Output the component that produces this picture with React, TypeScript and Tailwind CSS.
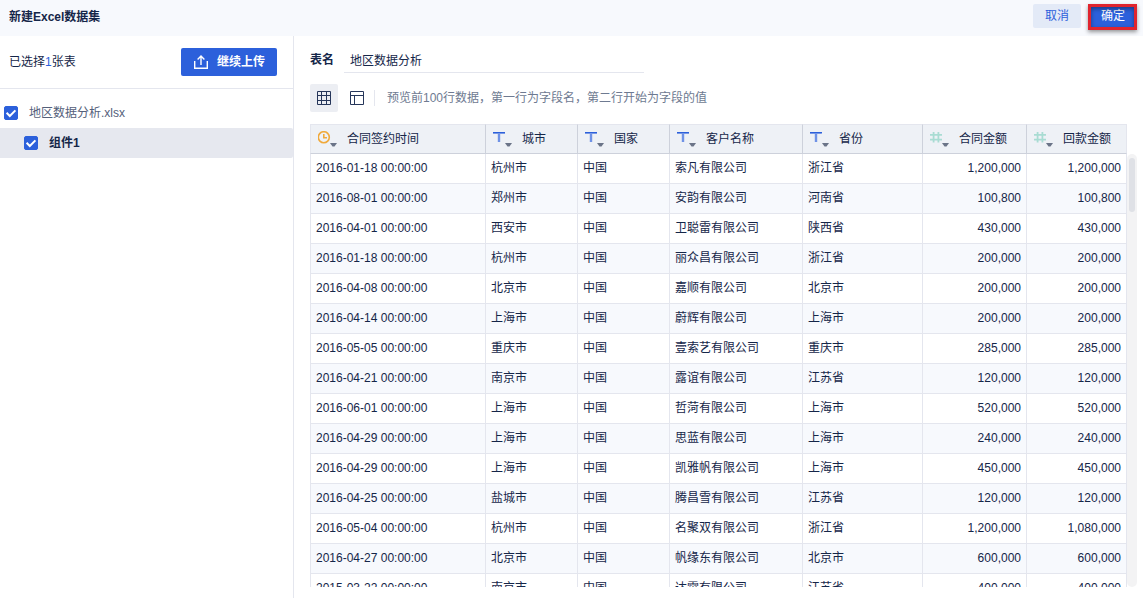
import { useState } from "react";

type FieldType = "date" | "text" | "number";

const columns: { name: string; type: FieldType; width: string }[] = [
  { name: "合同签约时间", type: "date", width: "w-[176px]" },
  { name: "城市", type: "text", width: "w-[92px]" },
  { name: "国家", type: "text", width: "w-[92px]" },
  { name: "客户名称", type: "text", width: "w-[133px]" },
  { name: "省份", type: "text", width: "w-[120px]" },
  { name: "合同金额", type: "number", width: "w-[104px]" },
  { name: "回款金额", type: "number", width: "w-[100px]" },
];

const rows = [
  ["2016-01-18 00:00:00", "杭州市", "中国", "索凡有限公司", "浙江省", "1,200,000", "1,200,000"],
  ["2016-08-01 00:00:00", "郑州市", "中国", "安韵有限公司", "河南省", "100,800", "100,800"],
  ["2016-04-01 00:00:00", "西安市", "中国", "卫聪雷有限公司", "陕西省", "430,000", "430,000"],
  ["2016-01-18 00:00:00", "杭州市", "中国", "丽众昌有限公司", "浙江省", "200,000", "200,000"],
  ["2016-04-08 00:00:00", "北京市", "中国", "嘉顺有限公司", "北京市", "200,000", "200,000"],
  ["2016-04-14 00:00:00", "上海市", "中国", "蔚辉有限公司", "上海市", "200,000", "200,000"],
  ["2016-05-05 00:00:00", "重庆市", "中国", "壹索艺有限公司", "重庆市", "285,000", "285,000"],
  ["2016-04-21 00:00:00", "南京市", "中国", "露谊有限公司", "江苏省", "120,000", "120,000"],
  ["2016-06-01 00:00:00", "上海市", "中国", "哲菏有限公司", "上海市", "520,000", "520,000"],
  ["2016-04-29 00:00:00", "上海市", "中国", "思蓝有限公司", "上海市", "240,000", "240,000"],
  ["2016-04-29 00:00:00", "上海市", "中国", "凯雅帆有限公司", "上海市", "450,000", "450,000"],
  ["2016-04-25 00:00:00", "盐城市", "中国", "腾昌雪有限公司", "江苏省", "120,000", "120,000"],
  ["2016-05-04 00:00:00", "杭州市", "中国", "名聚双有限公司", "浙江省", "1,200,000", "1,080,000"],
  ["2016-04-27 00:00:00", "北京市", "中国", "帆缘东有限公司", "北京市", "600,000", "600,000"],
  ["2015-03-22 00:00:00", "南京市", "中国", "达霄有限公司", "江苏省", "400,000", "400,000"],
];

function FieldIcon({ type }: { type: FieldType }) {
  return (
    <svg className="h-4 w-5 shrink-0" viewBox="0 0 20 16" fill="none">
      {type === "date" && (
        <g stroke="#f0a93b" strokeWidth="1.6">
          <circle cx="5.8" cy="6.2" r="5.5" />
          <path d="M5.8 3v3.8H9" />
        </g>
      )}
      {type === "text" && (
        <>
          <path d="M0 1h12v1.6H0z" fill="#2c60db" />
          <path d="M4.8 2.6h2.4V11H4.8z" fill="#6f92e6" />
        </>
      )}
      {type === "number" && (
        <path d="M3.6 1v10.4M8.4 1v10.4M0 3.8h12M0 8.6h12" stroke="#a9dcd3" strokeWidth="1.8" />
      )}
      <path d="M12 12h7l-2.5 3.6h-2z" fill="#6b7488" />
    </svg>
  );
}

function CheckBox({ id, checked, onChange }: { id: string; checked: boolean; onChange: () => void }) {
  return (
    <span className="grid size-3.5 shrink-0">
      <input
        id={id}
        type="checkbox"
        checked={checked}
        onChange={onChange}
        className="peer col-start-1 row-start-1 size-3.5 appearance-none rounded-xs border border-[#b4bbca] bg-white checked:border-[#2c60db] checked:bg-[#2c60db]"
      />
      <svg
        className="pointer-events-none invisible col-start-1 row-start-1 size-3.5 peer-checked:visible"
        viewBox="0 0 14 14"
        fill="none"
        stroke="#fff"
        strokeWidth="2"
      >
        <path d="M2.6 6.8l3.2 3.2 5.6-5.6" />
      </svg>
    </span>
  );
}

function Sidebar() {
  const [fileChecked, setFileChecked] = useState(true);
  const [sheetChecked, setSheetChecked] = useState(true);

  return (
    <aside className="flex w-[294px] shrink-0 flex-col border-r border-[#e4e6ee]">
      <div className="flex h-[53px] shrink-0 items-center justify-between border-b border-[#e4e6ee] pr-4 pl-[9px]">
        <p>
          已选择<span className="text-[#2c60db]">1</span>张表
        </p>
        <button className="flex h-7 w-24 items-center justify-center gap-2 rounded-xs bg-[#2c60db] font-bold text-white">
          <svg className="size-4" viewBox="0 0 16 16" fill="none" stroke="currentColor" strokeWidth="1.4">
            <path d="M1.7 7v7.3h12.6V7" />
            <path d="M8 11V2.2M4.6 5.4L8 2l3.4 3.4" />
          </svg>
          继续上传
        </button>
      </div>

      <div className="pt-[9px]">
        <div className="flex h-[30px] items-center gap-[11px] pl-1 text-[#54607a]">
          <CheckBox id="file" checked={fileChecked} onChange={() => setFileChecked(!fileChecked)} />
          <label htmlFor="file">地区数据分析.xlsx</label>
        </div>
        <div className="flex h-[30px] items-center gap-[11px] rounded-r-xs bg-[#e6e8ef] pl-6 font-bold">
          <CheckBox id="sheet" checked={sheetChecked} onChange={() => setSheetChecked(!sheetChecked)} />
          <label htmlFor="sheet">组件1</label>
        </div>
      </div>
    </aside>
  );
}

function PreviewTable() {
  return (
    <div className="flex min-h-0 flex-1">
      <div className="min-w-0 flex-1 overflow-y-auto [scrollbar-width:none]">
        <table className="w-full table-fixed border-separate border-spacing-0">
          <thead className="sticky top-0">
            <tr>
              {columns.map((col) => (
                <th
                  key={col.name}
                  className={`${col.width} h-[30px] border-y border-r border-t-[#e4e6ee] border-r-[#cdd1db] border-b-[#cdd1db] bg-[#eef1f6] p-0 font-normal first:border-l first:border-l-[#e4e6ee] last:border-r-[#e4e6ee]`}
                >
                  <div className="flex items-center gap-[9px] pl-[7px] whitespace-nowrap">
                    <FieldIcon type={col.type} />
                    {col.name}
                  </div>
                </th>
              ))}
            </tr>
          </thead>
          <tbody>
            {rows.map((row, i) => (
              <tr key={i} className="even:bg-[#f7f9fd]">
                {row.map((value, j) => (
                  <td
                    key={j}
                    className={`h-[30px] border-r border-b border-[#e4e6ee] px-[5px] pt-0 pb-0.5 whitespace-nowrap first:border-l ${
                      columns[j].type === "number" ? "text-right" : "text-left"
                    }`}
                  >
                    {value}
                  </td>
                ))}
              </tr>
            ))}
          </tbody>
        </table>
      </div>
      <div className="mt-[30px] w-2.5 shrink-0 rounded-md bg-[#f3f3f4] px-0.5 py-1">
        <div className="h-[54px] rounded-full bg-[#dfe1e6]" />
      </div>
    </div>
  );
}

export default function App() {
  const [tableName, setTableName] = useState("地区数据分析");

  return (
    <div className="flex h-screen flex-col overflow-hidden bg-white font-['Liberation_Sans','Noto_Sans_CJK_SC',sans-serif] text-xs text-[#152649]">
      <header className="flex h-9 shrink-0 items-center justify-between bg-[#f7f9fd] pr-1.5 pl-[9px]">
        <h1 className="pb-0.5 font-bold">新建Excel数据集</h1>
        <div className="flex gap-2 pb-1">
          <button className="h-6 w-12 rounded-xs bg-[#e3eaf7] text-[#2c60db]">取消</button>
          <div className="relative">
            <button className="h-6 w-12 rounded-xs bg-[#2c60db] text-white">确定</button>
            {/* highlight frame around the confirm button */}
            <span className="pointer-events-none absolute top-0 right-0 -bottom-0.5 -left-px border-3 border-[#e0242e] shadow-[0_2px_4px_rgba(0,0,0,0.4),inset_0_2px_4px_rgba(0,0,0,0.4)]" />
          </div>
        </div>
      </header>

      <div className="flex min-h-0 flex-1">
        <Sidebar />

        <main className="flex min-w-0 flex-1 flex-col pt-3 pr-1.5 pb-[11px] pl-4">
          <div className="flex items-center gap-2.5">
            <label htmlFor="table-name" className="pb-0.5 font-bold">
              表名
            </label>
            <input
              id="table-name"
              value={tableName}
              onChange={(e) => setTableName(e.target.value)}
              className="h-[25px] w-[300px] border-b border-[#e4e6ee] px-1.5 pb-0.5 outline-none"
            />
          </div>

          <div className="flex items-center pt-[11px] pb-3">
            <button aria-label="数据预览" className="flex size-7 items-center justify-center rounded-xs bg-[#eceef3]">
              <svg className="size-4" viewBox="0 0 16 16" fill="none" stroke="#26365a">
                <path d="M1.5 1.5h13v13h-13zM5.5 1.5v13M10.5 1.5v13M1.5 5.5h13M1.5 10.5h13" />
              </svg>
            </button>
            <button aria-label="字段设置" className="mr-0.5 ml-1 flex h-7 w-[30px] items-center justify-center">
              <svg className="size-4" viewBox="0 0 16 16" fill="none" stroke="#26365a">
                <path d="M1.5 1.5h13v13h-13zM1.5 5.5h13M5.5 5.5v9" />
              </svg>
            </button>
            <span className="h-4 w-px bg-[#e4e6ee]" />
            <p className="pl-3 text-[#6e7a91]">预览前100行数据，第一行为字段名，第二行开始为字段的值</p>
          </div>

          <PreviewTable />
        </main>
      </div>
    </div>
  );
}
